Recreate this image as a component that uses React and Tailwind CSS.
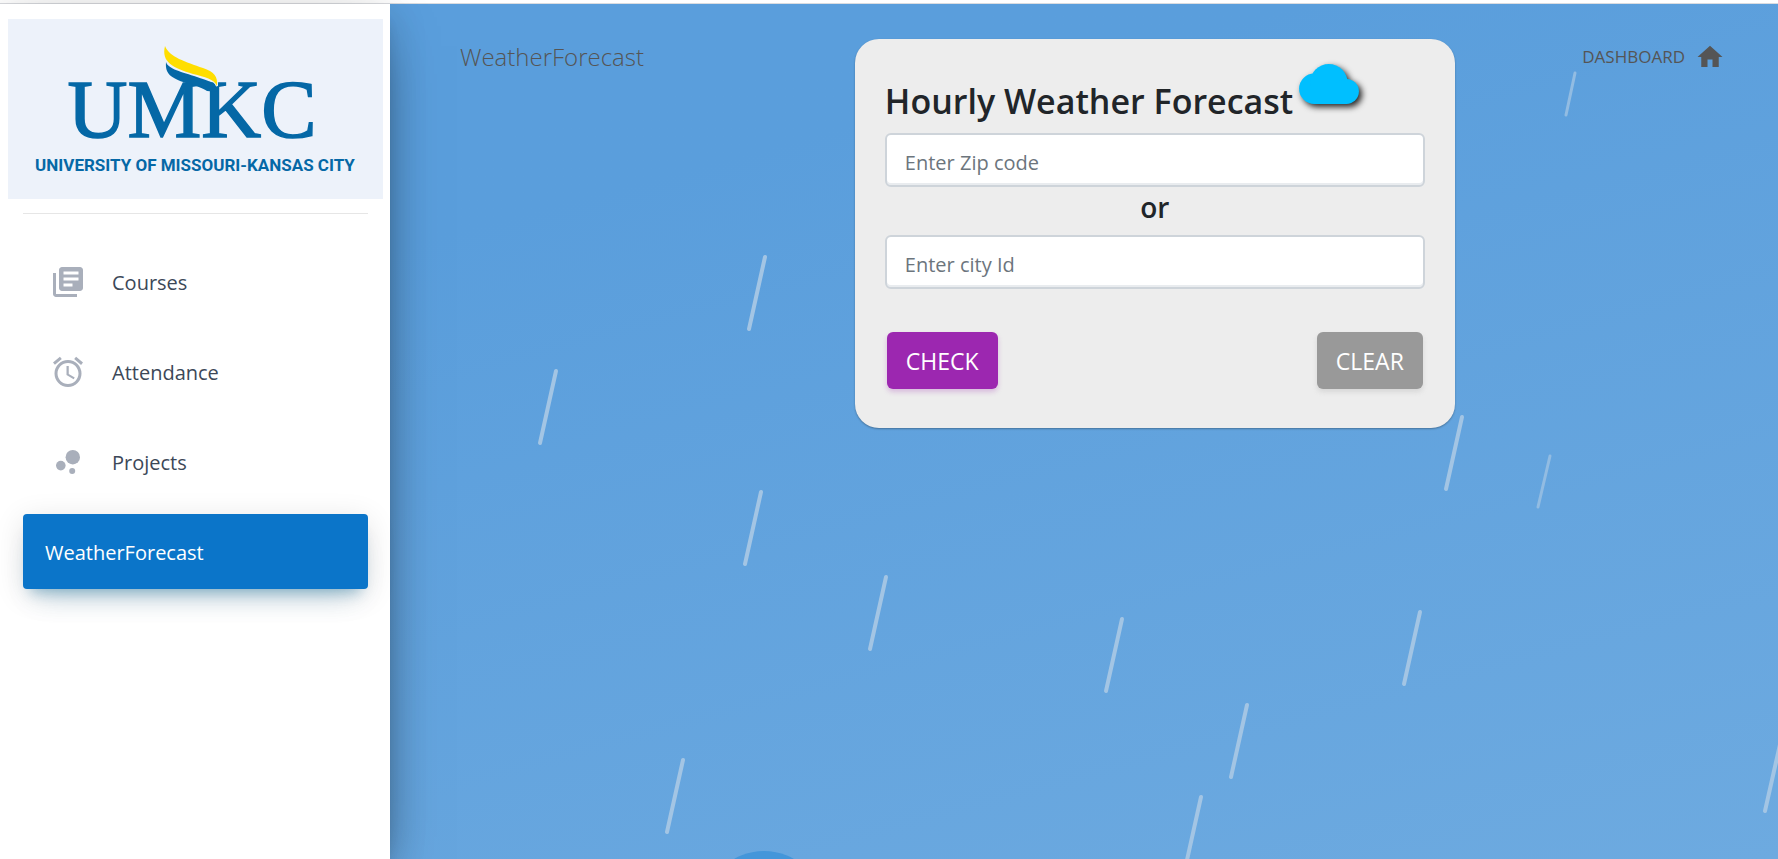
import { MdLibraryBooks, MdAccessAlarm, MdBubbleChart, MdHome } from "react-icons/md";

const navItems = [
  { label: "Courses", Icon: MdLibraryBooks },
  { label: "Attendance", Icon: MdAccessAlarm },
  { label: "Projects", Icon: MdBubbleChart },
];

// Each drop: top x, top y, bottom x, bottom y
const drops = [
  [375, 253, 359, 325],
  [166, 367, 150, 439],
  [371, 488, 355, 560],
  [496, 573, 480, 645],
  [732, 615, 716, 687],
  [1030, 608, 1014, 680],
  [857, 701, 841, 773],
  [811, 793, 795, 865],
  [293, 756, 277, 828],
  [1072, 413, 1056, 485],
  [1391, 736, 1375, 807],
];
const smallDrops = [
  [1160, 452, 1148, 503],
  [1185, 69, 1176, 111],
];

function Logo() {
  return (
    <svg viewBox="0 0 375 180" className="block w-full bg-[#edf2fa]" role="img" aria-label="UMKC University of Missouri-Kansas City">
      <g fill="#0568a6">
        <text
          x="184"
          y="118"
          textAnchor="middle"
          fontFamily="'Liberation Serif', serif"
          fontSize="83"
          stroke="#0568a6"
          strokeWidth="1.5"
        >
          UMKC
        </text>
        <path d="M158 43 C160 50 174 53 189 58 C204 63 209 64 210 73 L199 72 C195 69 188 67 178 64 C163 59 157 55 158 43 Z" />
        <text x="187" y="152" textAnchor="middle" fontFamily="Roboto, sans-serif" fontWeight="700" fontSize="17">
          UNIVERSITY OF MISSOURI-KANSAS CITY
        </text>
      </g>
      <path
        fill="#ffde00"
        stroke="#edf2fa"
        strokeWidth="2"
        paintOrder="stroke"
        d="M157 27 C161 38 178 43 195 49 C206 53 210 57 209 67 C206 60 197 58 185 55 C165 49 153 43 157 27 Z"
      />
    </svg>
  );
}

function Sky() {
  return (
    <svg
      viewBox="0 0 1388 855"
      preserveAspectRatio="xMinYMin slice"
      className="absolute inset-0 h-full w-full"
      aria-hidden="true"
    >
      <g stroke="#a3c5e4" strokeLinecap="round">
        {drops.map(([x1, y1, x2, y2]) => (
          <line key={`${x1}-${y1}`} x1={x1} y1={y1} x2={x2} y2={y2} strokeWidth="4" />
        ))}
        {smallDrops.map(([x1, y1, x2, y2]) => (
          <line key={`${x1}-${y1}`} x1={x1} y1={y1} x2={x2} y2={y2} strokeWidth="3" stroke="#92bce2" />
        ))}
      </g>
      <circle cx="374" cy="907" r="60" fill="#4496da" />
    </svg>
  );
}

function Cloud() {
  return (
    <svg
      viewBox="0 0 181 121"
      className="h-10 w-15 overflow-visible drop-shadow-[3px_3px_3px_rgba(0,0,0,0.85)]"
      aria-hidden="true"
    >
      <g fill="#00bfff">
        <circle cx="46" cy="75" r="46" />
        <circle cx="90" cy="57" r="57" />
        <circle cx="143" cy="83" r="38" />
        <rect x="46" y="60" width="97" height="61" />
      </g>
    </svg>
  );
}

function Field({ id, label }) {
  return (
    <input
      id={id}
      type="text"
      aria-label={label}
      placeholder={label}
      className="block h-[54px] w-full rounded-md border-2 border-[#ced4da] bg-white px-[18px] pt-1 text-xl text-[#495057] shadow-[inset_0_-2px_0_#e9ecef] placeholder:text-[#6c757d]"
    />
  );
}

export default function App() {
  return (
    <div className="flex min-h-screen flex-col bg-white font-['Open_Sans',sans-serif]">
      <div className="h-1 border-b border-[#dadce0]" />
      <div className="flex flex-1">
        <aside className="relative z-10 w-[390px] shrink-0 bg-white shadow-[0_24px_57px_-18px_rgba(0,0,0,0.56),0_6px_38px_0_rgba(0,0,0,0.12),0_12px_15px_-8px_rgba(0,0,0,0.2)]">
          <div className="pt-[15px] pr-[7px] pl-2">
            <Logo />
          </div>
          <nav className="mt-[14px] mr-[22px] ml-[23px] border-t border-[#e6e6e6] pt-[30px]">
            <ul className="flex flex-col gap-[15px]">
              {navItems.map(({ label, Icon }) => (
                <li key={label}>
                  <a href="#" className="flex h-[75px] items-center gap-[26px] rounded px-[27px] text-xl text-[#3c4858]">
                    <Icon className="size-9 text-[#a9afbb]" aria-hidden="true" />
                    <span className="pt-0.5">{label}</span>
                  </a>
                </li>
              ))}
              <li>
                <a
                  href="#"
                  aria-current="page"
                  className="flex h-[75px] items-center rounded bg-[#0b75c9] px-[22px] pt-0.5 text-xl text-white shadow-[0_18px_30px_-15px_rgba(0,107,160,0.28),0_6px_30px_0_rgba(0,0,0,0.12),0_11px_12px_-8px_rgba(0,107,160,0.3)]"
                >
                  WeatherForecast
                </a>
              </li>
            </ul>
          </nav>
        </aside>

        <main className="relative flex-1 overflow-hidden bg-linear-165 from-[#5a9edc] from-20% to-[#6daae0]">
          <Sky />
          <div className="relative grid grid-cols-[19fr_600px_13fr] items-start pt-[35px] pr-[53px] pl-[70px]">
            <h1 className="text-2xl leading-9 font-light text-[#555555]">WeatherForecast</h1>
            <section className="rounded-3xl bg-[#ededed] px-[30px] pt-[25px] pb-[39px] shadow-[0_1px_2px_rgba(0,0,0,0.3)]">
              <form onSubmit={(e) => e.preventDefault()}>
                <div className="flex h-[69px] gap-1.5">
                  <h2 className="pt-3 text-[34px] leading-[50px] font-semibold whitespace-nowrap text-[#212529]">
                    Hourly Weather Forecast
                  </h2>
                  <Cloud />
                </div>
                <Field id="zip" label="Enter Zip code" />
                <p className="pb-2 text-center text-[28px] leading-10 font-semibold text-[#212529]">or</p>
                <Field id="city" label="Enter city Id" />
                <div className="mt-[43px] flex justify-between px-0.5">
                  <button
                    type="submit"
                    className="h-[57px] rounded-md bg-[#9c27b0] px-[19px] pt-0.5 text-[23px] text-white shadow-[0_3px_5px_rgba(156,39,176,0.25)]"
                  >
                    CHECK
                  </button>
                  <button
                    type="reset"
                    className="h-[57px] rounded-md bg-[#999999] px-[19px] pt-0.5 text-[23px] text-white shadow-[0_3px_5px_rgba(153,153,153,0.25)]"
                  >
                    CLEAR
                  </button>
                </div>
              </form>
            </section>
            <a href="#" className="flex h-9 items-center gap-2.5 justify-self-end text-[17px] text-[#555555]">
              DASHBOARD
              <MdHome className="size-[30px]" aria-hidden="true" />
            </a>
          </div>
        </main>
      </div>
    </div>
  );
}
